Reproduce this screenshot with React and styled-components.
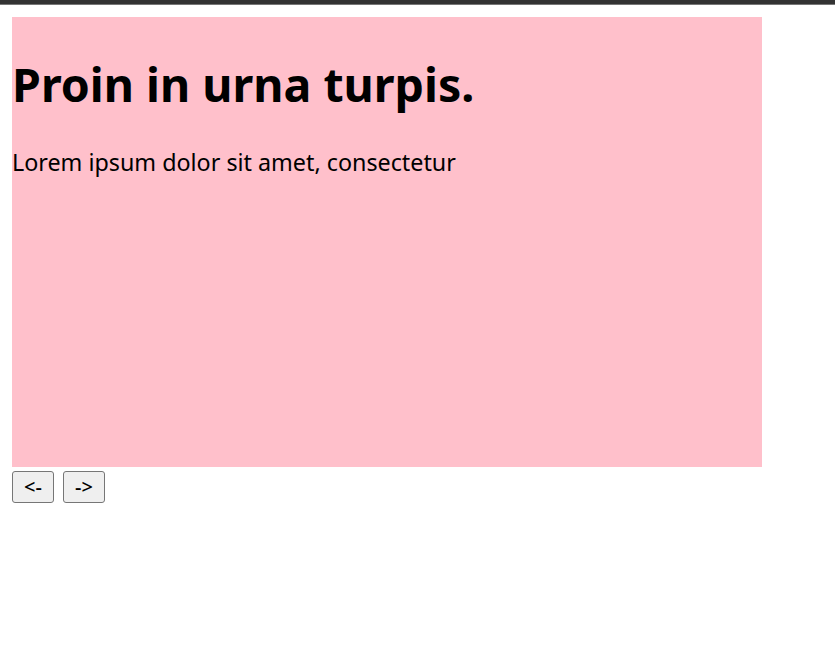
import styled, { createGlobalStyle } from "styled-components";

const GlobalStyle = createGlobalStyle`
  body {
    margin: 0;
    background: #fff;
    font-family: "Noto Sans", "Noto Sans CJK KR", sans-serif;
  }
`;

const TopBar = styled.div`
  height: 4px;
  background: #333;
  border-bottom: 1px solid #777;
`;

const Page = styled.div`
  padding: 12px;
`;

const Slide = styled.div`
  width: 750px;
  height: 450px;
  background: pink;
  overflow: hidden;
`;

const Title = styled.h1`
  margin: 32px 0 0;
  font-size: 46.5px;
  line-height: 70px;
  font-weight: 700;
  color: #000;
`;

const Text = styled.p`
  margin: 28px 0 0;
  font-size: 23.3px;
  line-height: 30px;
  color: #000;
`;

const Controls = styled.div`
  display: flex;
  gap: 9px;
  margin-top: 4px;
`;

const NavButton = styled.button`
  width: 42px;
  height: 32px;
  padding: 0 0 2px;
  font-family: "Noto Sans", sans-serif;
  font-size: 20px;
  font-weight: 500;
  color: #000;
  background: #efefef;
  border: 1px solid #767676;
  border-radius: 3px;
`;

const slides = [
  {
    title: "Proin in urna turpis.",
    text: "Lorem ipsum dolor sit amet, consectetur",
  },
];

export default function App() {
  const slide = slides[0];
  return (
    <>
      <GlobalStyle />
      <TopBar />
      <Page>
        <Slide>
          <Title>{slide.title}</Title>
          <Text>{slide.text}</Text>
        </Slide>
        <Controls>
          <NavButton>{"<-"}</NavButton>
          <NavButton>{"->"}</NavButton>
        </Controls>
      </Page>
    </>
  );
}
